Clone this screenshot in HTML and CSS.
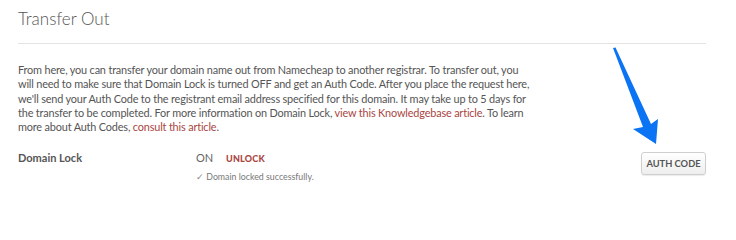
FILE: index.html
```html
<!DOCTYPE html>
<html>
<head>
<meta charset="utf-8">
<link rel="stylesheet" href="styles.css">
</head>
<body>
<div class="panel">
  <h2 class="title">Transfer Out</h2>
  <div class="divider"></div>
  <p class="desc">From here, you can transfer your domain name out from Namecheap to another registrar. To transfer out, you<br>will need to make sure that Domain Lock is turned OFF and get an Auth Code. After you place the request here,<br>we'll send your Auth Code to the registrant email address specified for this domain. It may take up to 5 days for<br>the transfer to be completed. For more information on Domain Lock, <a class="link" href="#">view this Knowledgebase article</a>. To learn<br>more about Auth Codes, <a class="link" href="#">consult this article</a>.</p>
  <div class="row">
    <div class="label">Domain Lock</div>
    <div class="status">
      <div class="state"><span class="on">ON</span><a class="unlock" href="#">UNLOCK</a></div>
      <div class="msg"><span class="check">✓</span> Domain locked successfully.</div>
    </div>
    <button class="btn">AUTH CODE</button>
  </div>
  <svg class="arrow" width="60" height="100" viewBox="0 0 60 100">
    <polygon points="0,0 2.5,-0.5 38,76 45,71 43,96 20,81 30,79" fill="#0b74f4"/>
  </svg>
</div>
</body>
</html>
```
FILE: styles.css
```css
html, body {
  margin: 0;
  padding: 0;
  background: #fff;
}
.panel {
  position: relative;
  padding: 0 30px 0 18px;
  font-family: Lato, "Open Sans", sans-serif;
  color: #555;
}
.title {
  margin: 0;
  padding-top: 9px;
  font-size: 17px;
  font-weight: 300;
  line-height: 20px;
  color: #555;
}
.divider {
  margin-top: 14px;
  height: 1px;
  background: #e3e3e3;
}
.desc {
  margin: 19px 0 0;
  white-space: nowrap;
  font-size: 10.9px;
  letter-spacing: -0.17px;
  line-height: 14.3px;
  color: #555;
}
.link {
  color: #a9463f;
  text-decoration: none;
}
.row {
  display: flex;
  align-items: flex-start;
  margin-top: 17px;
}
.label {
  width: 178px;
  font-size: 11px;
  font-weight: 700;
  line-height: 14px;
  color: #555;
}
.status {
  flex: 1;
}
.state {
  display: flex;
  align-items: baseline;
  line-height: 14px;
}
.on {
  font-size: 11px;
  color: #666;
  width: 30px;
}
.unlock {
  font-size: 9px;
  font-weight: 900;
  color: #a9463f;
  text-decoration: none;
  letter-spacing: 0.2px;
}
.msg {
  margin-top: 5px;
  font-size: 8.8px;
  color: #777;
}
.check {
  color: #888;
}
.btn {
  margin-top: 1px;
  width: 65px;
  height: 23px;
  padding: 0;
  border: 1px solid #cfcfcf;
  border-radius: 3px;
  background: linear-gradient(#ffffff, #eeeeee);
  box-shadow: 0 1px 1px rgba(0,0,0,0.08);
  font-family: Lato, "Open Sans", sans-serif;
  font-size: 9.3px;
  font-weight: 700;
  color: #555;
}
.arrow {
  position: absolute;
  left: 613px;
  top: 48px;
  overflow: visible;
}
```
